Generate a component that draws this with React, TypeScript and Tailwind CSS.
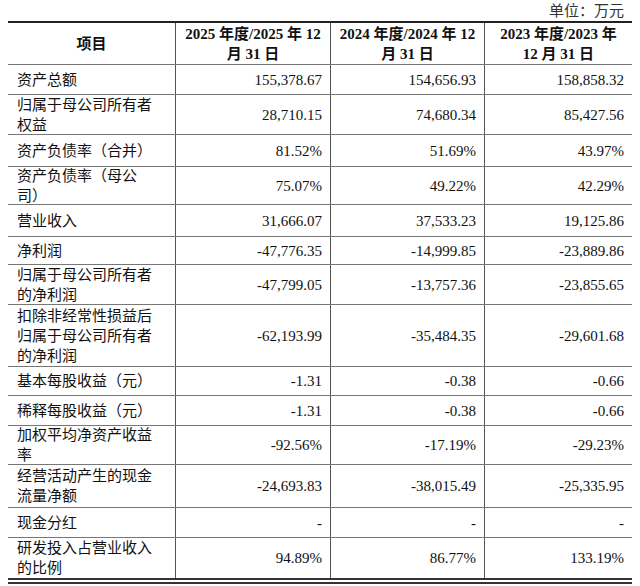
import React from "react";

type Row = { label: React.ReactNode; v: [string, string, string]; h: string };

const rows: Row[] = [
  { label: "资产总额", v: ["155,378.67", "154,656.93", "158,858.32"], h: "h-[30px]" },
  { label: <>归属于母公司所有者<br />权益</>, v: ["28,710.15", "74,680.34", "85,427.56"], h: "h-[40px]" },
  { label: "资产负债率（合并）", v: ["81.52%", "51.69%", "43.97%"], h: "h-[32px]" },
  { label: <>资产负债率（母公<br />司）</>, v: ["75.07%", "49.22%", "42.29%"], h: "h-[38px]" },
  { label: "营业收入", v: ["31,666.07", "37,533.23", "19,125.86"], h: "h-[32px]" },
  { label: "净利润", v: ["-47,776.35", "-14,999.85", "-23,889.86"], h: "h-[28px]" },
  { label: <>归属于母公司所有者<br />的净利润</>, v: ["-47,799.05", "-13,757.36", "-23,855.65"], h: "h-[40px]" },
  { label: <>扣除非经常性损益后<br />归属于母公司所有者<br />的净利润</>, v: ["-62,193.99", "-35,484.35", "-29,601.68"], h: "h-[62px]" },
  { label: "基本每股收益（元）", v: ["-1.31", "-0.38", "-0.66"], h: "h-[29px]" },
  { label: "稀释每股收益（元）", v: ["-1.31", "-0.38", "-0.66"], h: "h-[30px]" },
  { label: <>加权平均净资产收益<br />率</>, v: ["-92.56%", "-17.19%", "-29.23%"], h: "h-[39px]" },
  { label: <>经营活动产生的现金<br />流量净额</>, v: ["-24,693.83", "-38,015.49", "-25,335.95"], h: "h-[43px]" },
  { label: "现金分红", v: ["-", "-", "-"], h: "h-[30px]" },
  { label: <>研发投入占营业收入<br />的比例</>, v: ["94.89%", "86.77%", "133.19%"], h: "h-[40px]" },
];

const font = { fontFamily: '"Liberation Serif", "Noto Sans CJK SC", serif' };

export default function App() {
  return (
    <div className="w-[640px] h-[586px] bg-white text-[#111] text-[15px] leading-[20px]" style={font}>
      <div className="h-[21px] flex items-center justify-end pr-[16px] text-[#333] text-[15px]">单位：万元</div>
      <div className="ml-[8px] w-[624px] border-t-2 border-[#222]">
        <div className="flex h-[42px] border-b border-[#777] font-bold">
          <div className="w-[168px] flex items-center justify-center border-r border-[#555]">项目</div>
          <div className="w-[155px] flex items-center justify-center text-center border-r border-[#555]">
            2025 年度/2025 年 12<br />月 31 日
          </div>
          <div className="w-[154px] flex items-center justify-center text-center border-r border-[#555]">
            2024 年度/2024 年 12<br />月 31 日
          </div>
          <div className="flex-1 flex items-center justify-center text-center">
            2023 年度/2023 年<br />12 月 31 日
          </div>
        </div>
        {rows.map((r, i) => (
          <div
            key={i}
            className={`flex ${r.h} ${i === rows.length - 1 ? "" : "border-b border-[#777]"}`}
          >
            <div className="w-[168px] flex items-center pl-[9px] border-r border-[#555]">
              <div>{r.label}</div>
            </div>
            <div className="w-[155px] flex items-center justify-end pr-[8px] border-r border-[#555]">{r.v[0]}</div>
            <div className="w-[154px] flex items-center justify-end pr-[8px] border-r border-[#555]">{r.v[1]}</div>
            <div className="flex-1 flex items-center justify-end pr-[8px]">{r.v[2]}</div>
          </div>
        ))}
        <div className="h-[6px] border-t-2 border-b-2 border-[#333]" />
      </div>
    </div>
  );
}
